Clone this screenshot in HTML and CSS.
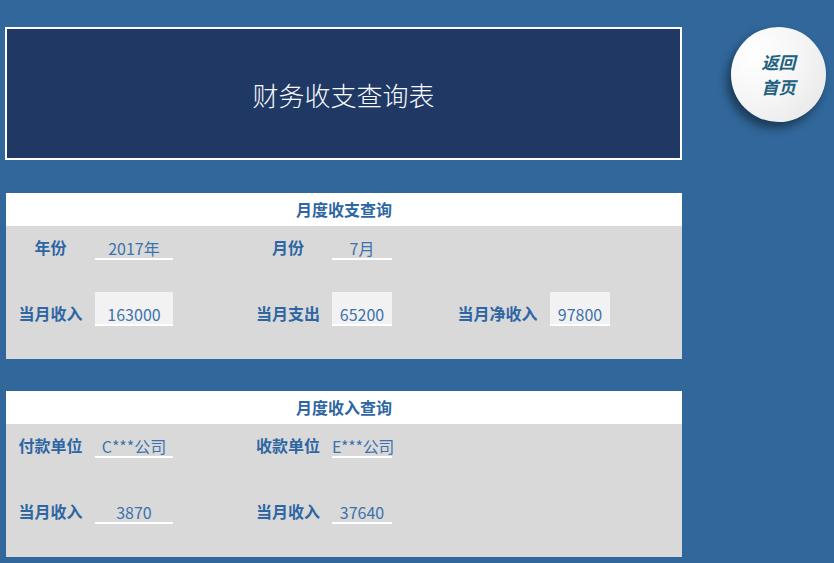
FILE: index.html
```html
<!DOCTYPE html>
<html lang="zh">
<head>
<meta charset="utf-8">
<title>财务收支查询表</title>
<link rel="stylesheet" href="styles.css">
</head>
<body>
<div class="page">
  <div class="title-box">财务收支查询表</div>

  <section class="panel panel-first">
    <div class="panel-head">月度收支查询</div>
    <div class="panel-body">
      <div class="row row-a">
        <div class="label c1">年份</div>
        <div class="val line c2">2017年</div>
        <div class="label c4">月份</div>
        <div class="val line c5">7月</div>
      </div>
      <div class="row row-b">
        <div class="label c1">当月收入</div>
        <div class="val fill c2">163000</div>
        <div class="label c4">当月支出</div>
        <div class="val fill c5">65200</div>
        <div class="label c7">当月净收入</div>
        <div class="val fill c8">97800</div>
      </div>
    </div>
  </section>

  <section class="panel panel-second">
    <div class="panel-head">月度收入查询</div>
    <div class="panel-body">
      <div class="row row-a">
        <div class="label c1">付款单位</div>
        <div class="val line c2">C***公司</div>
        <div class="label c4">收款单位</div>
        <div class="val line c5 tight">E***公司</div>
      </div>
      <div class="row row-c">
        <div class="label c1">当月收入</div>
        <div class="val line c2">3870</div>
        <div class="label c4">当月收入</div>
        <div class="val line c5">37640</div>
      </div>
    </div>
  </section>

  <a class="home-btn" href="#"><span class="btn-line">返回</span><span class="btn-line">首页</span></a>
</div>
</body>
</html>
```

FILE: styles.css
```css
html, body {
  margin: 0;
  padding: 0;
}
body {
  background: #31679b;
  font-family: "Noto Sans CJK SC", "Noto Sans", sans-serif;
  width: 834px;
  height: 563px;
  overflow: hidden;
}
.page {
  position: relative;
  padding-top: 27px;
  height: 536px;
}
.title-box {
  box-sizing: border-box;
  margin-left: 5px;
  width: 677px;
  height: 133px;
  border: 2px solid #ffffff;
  background: #203864;
  color: #f7f9fc;
  font-size: 26px;
  font-weight: 300;
  display: flex;
  align-items: center;
  justify-content: center;
  padding-top: 2px;
}
.panel {
  margin-left: 6px;
  width: 676px;
}
.panel-first {
  margin-top: 33px;
}
.panel-second {
  margin-top: 32px;
}
.panel-head {
  height: 33px;
  background: #ffffff;
  color: #2e66a3;
  font-size: 16px;
  font-weight: 700;
  line-height: 33px;
  text-align: center;
}
.panel-body {
  background: #d9d9d9;
  height: 123px;
  padding-top: 10px;
  display: flex;
  flex-direction: column;
}
.row {
  display: grid;
  grid-template-columns: 89px 78px 71px 88px 60px 53px 105px 60px;
  align-items: end;
}
.row-a {
  height: 24px;
}
.row-b {
  margin-top: 32px;
  height: 34px;
}
.row-c {
  margin-top: 42px;
  height: 24px;
}
.c1 { grid-column: 1; }
.c2 { grid-column: 2; }
.c4 { grid-column: 4; }
.c5 { grid-column: 5; }
.c7 { grid-column: 7; }
.c8 { grid-column: 8; }
.label {
  color: #2e66a3;
  font-size: 16px;
  font-weight: 700;
  line-height: 20px;
  text-align: center;
  margin-bottom: 3px;
  white-space: nowrap;
}
.val {
  color: #3d72ad;
  font-size: 16px;
  line-height: 20px;
  text-align: center;
  border-bottom: 2px solid #ffffff;
  white-space: nowrap;
}
.val.line {
  padding-top: 2px;
}
.val.fill {
  background: #f2f2f2;
  padding-top: 12px;
}
.val.tight {
  letter-spacing: -0.3px;
  text-align: left;
}
.home-btn {
  position: absolute;
  left: 731px;
  top: 27px;
  width: 95px;
  height: 95px;
  border-radius: 50%;
  background: radial-gradient(circle at 25% 30%, #ffffff 0%, #f6f6f6 45%, #e4e4e4 100%);
  box-shadow: -4px 6px 10px rgba(0, 0, 0, 0.45);
  color: #21607e;
  font-size: 17px;
  font-weight: 700;
  font-style: italic;
  text-decoration: none;
  display: flex;
  flex-direction: column;
  align-items: center;
  justify-content: center;
  box-sizing: border-box;
  padding-bottom: 2px;
}
.btn-line {
  display: block;
  line-height: 25px;
  height: 25px;
}
```
